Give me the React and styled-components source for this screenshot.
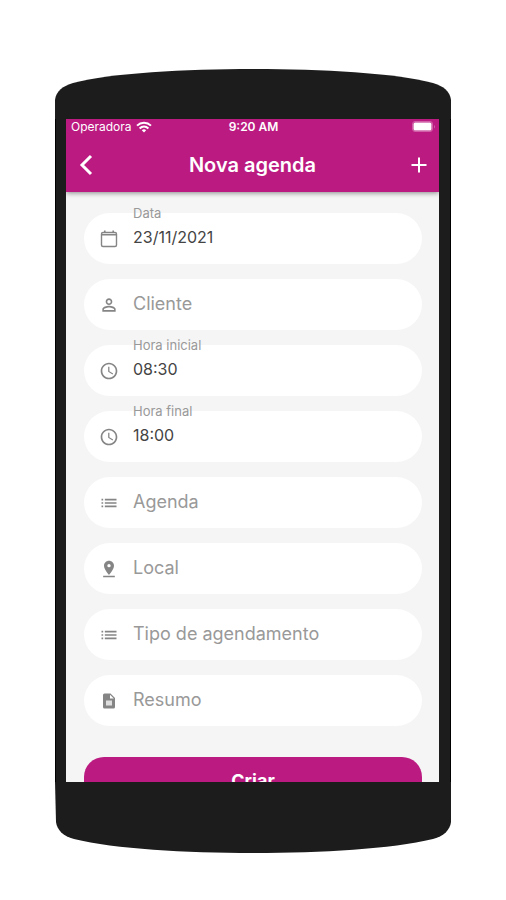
import React, { useState } from "react";
import styled, { createGlobalStyle, css } from "styled-components";
import { MdAccessTime, MdList, MdPersonOutline, MdPinDrop } from "react-icons/md";

const PINK = "#bb1a81";
const BODY = "#1c1c1c";

const GlobalStyle = createGlobalStyle`
  * {
    box-sizing: border-box;
  }
  body {
    margin: 0;
    background: #fff;
    font-family: Inter, "Liberation Sans", sans-serif;
  }
`;

const Page = styled.main`
  min-height: 100vh;
  padding: 69px 55px 47px;
  display: flex;
  flex-direction: column;
`;

const Phone = styled.div`
  flex: 1;
  display: flex;
  flex-direction: column;
`;

const Bezel = styled.svg`
  display: block;
  width: 100%;
  flex: none;
`;

const Sides = styled.div`
  flex: 1 1 0;
  min-height: 0;
  display: flex;
  background: ${BODY};
  border: solid #000;
  border-width: 0 1px;
  padding: 0 11px 0 10px;
`;

const Screen = styled.div`
  flex: 1;
  min-width: 0;
  display: flex;
  flex-direction: column;
  overflow: hidden;
  background: #f5f5f5;
`;

const Header = styled.header`
  flex: none;
  background: ${PINK};
  color: #fff;
  box-shadow: 0 1px 5px rgba(0, 0, 0, 0.45);
`;

const StatusBar = styled.div`
  display: grid;
  grid-template-columns: 1fr auto 1fr;
  align-items: center;
  height: 16px;
  padding: 0 3px 0 5px;
  font-size: 12px;
  line-height: 16px;
`;

const Carrier = styled.span`
  display: flex;
  align-items: center;
  gap: 4px;
`;

const Clock = styled.span`
  font-weight: 600;
`;

const Battery = styled.svg`
  justify-self: end;
`;

const TitleBar = styled.div`
  display: grid;
  grid-template-columns: 40px 1fr 40px;
  align-items: center;
  height: 57px;
  padding-top: 2px;
`;

const Title = styled.h1`
  margin: 0;
  font-size: 20px;
  line-height: 24px;
  font-weight: 600;
  text-align: center;
`;

const IconButton = styled.button`
  display: flex;
  align-items: center;
  justify-content: center;
  height: 40px;
  padding: 0;
  border: 0;
  background: none;
  color: inherit;
  cursor: pointer;
`;

const Form = styled.form`
  display: flex;
  flex-direction: column;
  gap: 15px;
  padding: 21px 17px 0 18px;
`;

const FieldBox = styled.div`
  position: relative;
  flex: none;
  display: flex;
  align-items: center;
  height: 51px;
  padding: 0 24px 0 15px;
  border-radius: 26px;
  background: #fff;
  color: #858585;

  svg {
    flex: none;
    width: 20px;
    height: 20px;
  }
`;

const Label = styled.label`
  position: absolute;
  left: 49px;
  color: #999;
  pointer-events: none;

  ${({ $floating }) =>
    $floating
      ? css`
          top: -8px;
          font-size: 13px;
          line-height: 16px;
        `
      : css`
          top: 13px;
          font-size: 18px;
          line-height: 24px;
        `}
`;

const Input = styled.input`
  flex: 1;
  min-width: 0;
  height: 51px;
  margin-left: 14px;
  padding: 0 0 4px;
  border: 0;
  outline: 0;
  background: none;
  color: #444;
  font: inherit;
  font-size: 16px;
`;

const SubmitButton = styled.button`
  flex: none;
  height: 46px;
  margin-top: 16px;
  border: 0;
  border-radius: 20px;
  background: ${PINK};
  color: #fff;
  font: inherit;
  font-size: 18px;
  font-weight: 700;
  cursor: pointer;
`;

function CalendarIcon(props) {
  return (
    <svg viewBox="0 0 20 20" {...props}>
      <rect x="2.500" y="3.500" width="15" height="14" rx="1.500" fill="none" stroke="currentColor" strokeWidth="1.400" />
      <path d="M2.500 5.800h15M5.800 1.500v2.500M14.200 1.500v2.500" fill="none" stroke="currentColor" strokeWidth="1.600" />
    </svg>
  );
}

function FileIcon(props) {
  return (
    <svg viewBox="0 0 20 20" {...props}>
      <path
        d="M5.500 2.500H11.500L16 7V16Q16 17.500 14.500 17.500H5.500Q4 17.500 4 16V4Q4 2.500 5.500 2.500Z"
        fill="currentColor"
      />
      <path d="M11 3.700V7.500H14.800Z" fill="#fff" />
      <path d="M7 9.500h6v5H7Z" fill="#dedede" />
    </svg>
  );
}

const fields = [
  { id: "data", label: "Data", icon: CalendarIcon, value: "23/11/2021" },
  { id: "cliente", label: "Cliente", icon: MdPersonOutline },
  { id: "horaInicial", label: "Hora inicial", icon: MdAccessTime, value: "08:30" },
  { id: "horaFinal", label: "Hora final", icon: MdAccessTime, value: "18:00" },
  { id: "agenda", label: "Agenda", icon: MdList },
  { id: "local", label: "Local", icon: MdPinDrop },
  { id: "tipo", label: "Tipo de agendamento", icon: MdList },
  { id: "resumo", label: "Resumo", icon: FileIcon },
];

function Field({ id, label, icon: Icon, value = "" }) {
  const [text, setText] = useState(value);

  return (
    <FieldBox>
      <Icon aria-hidden="true" />
      <Input id={id} value={text} onChange={(e) => setText(e.target.value)} />
      <Label htmlFor={id} $floating={text !== ""}>
        {label}
      </Label>
    </FieldBox>
  );
}

function App() {
  return (
    <React.Fragment>
      <GlobalStyle />
      <Page>
        <Phone>
          <Bezel height="50" viewBox="0 0 396 50" preserveAspectRatio="none" aria-hidden="true">
            <path
              d="M0 50V31C1 22 8 17 18 14C56 4 130 0 198 0S340 4 378 14C388 17 395 22 396 31V50Z"
              fill={BODY}
            />
          </Bezel>
          <Sides>
            <Screen>
              <Header>
                <StatusBar>
                  <Carrier>
                    Operadora
                    <svg width="16" height="12" viewBox="0 0 16 12" aria-hidden="true">
                      <g fill="none" stroke="#fff" strokeWidth="2">
                        <path d="M1 4.6C5 .8 11 .8 15 4.6" />
                        <path d="M3.6 7.4C6.2 5 9.8 5 12.4 7.4" />
                      </g>
                      <path d="M5.8 9.2C7.1 8 8.9 8 10.2 9.2L8 11.6Z" fill="#fff" />
                    </svg>
                  </Carrier>
                  <Clock>9:20 AM</Clock>
                  <Battery width="24" height="12" viewBox="0 0 24 12" aria-hidden="true">
                    <rect x=".5" y=".5" width="20" height="10" rx="2.5" fill="none" stroke="#fff" strokeOpacity=".3" />
                    <rect x="1.500" y="1.500" width="18" height="8" rx="1.500" fill="#fff" />
                    <path d="M22 4v3.500c1-.4 1-3.100 0-3.500Z" fill="#fff" fillOpacity=".4" />
                  </Battery>
                </StatusBar>
                <TitleBar>
                  <IconButton type="button" aria-label="Voltar">
                    <svg width="14" height="22" viewBox="0 0 14 22" aria-hidden="true">
                      <path d="M12 2L3 11l9 9" fill="none" stroke="#fff" strokeWidth="3" />
                    </svg>
                  </IconButton>
                  <Title>Nova agenda</Title>
                  <IconButton type="button" aria-label="Adicionar">
                    <svg width="16" height="16" viewBox="0 0 16 16" aria-hidden="true">
                      <path d="M8 0.500v15M0.500 8h15" fill="none" stroke="#fff" strokeWidth="2" />
                    </svg>
                  </IconButton>
                </TitleBar>
              </Header>
              <Form onSubmit={(e) => e.preventDefault()}>
                {fields.map((field) => (
                  <Field key={field.id} {...field} />
                ))}
                <SubmitButton type="submit">Criar</SubmitButton>
              </Form>
            </Screen>
          </Sides>
          <Bezel height="71" viewBox="0 0 396 71" preserveAspectRatio="none" aria-hidden="true">
            <path
              d="M0 0H396V40C395 48 389 54 378 57C336 67 266 71 198 71S60 67 19 57C8 54 2 48 1 40Z"
              fill={BODY}
            />
          </Bezel>
        </Phone>
      </Page>
    </React.Fragment>
  );
}

export default App;
